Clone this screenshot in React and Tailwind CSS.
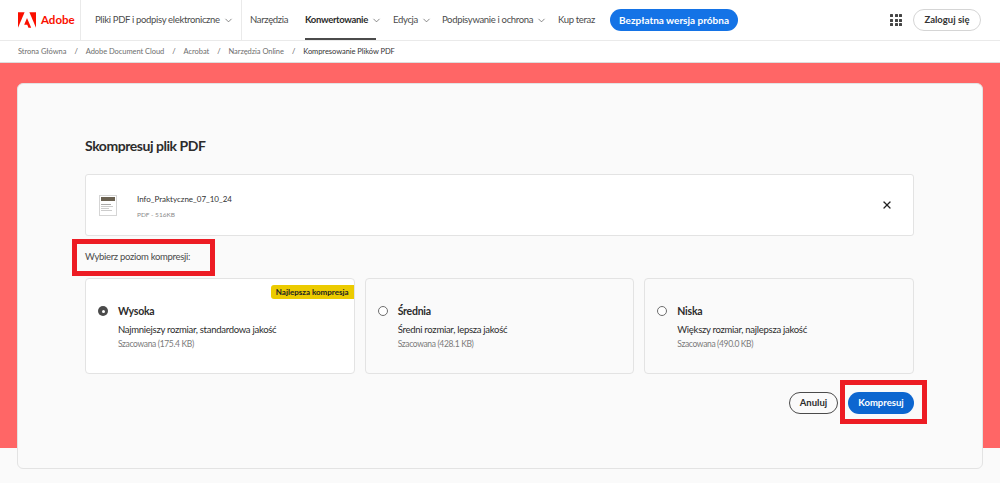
import { ChevronDown, X } from 'lucide-react';

const crumbs = ['Strona Główna', 'Adobe Document Cloud', 'Acrobat', 'Narzędzia Online'];

const levels = [
  { name: 'Wysoka', desc: 'Najmniejszy rozmiar, standardowa jakość', est: 'Szacowana (175.4 KB)', active: true },
  { name: 'Średnia', desc: 'Średni rozmiar, lepsza jakość', est: 'Szacowana (428.1 KB)' },
  { name: 'Niska', desc: 'Większy rozmiar, najlepsza jakość', est: 'Szacowana (490.0 KB)' },
];

function NavItem({ label, className = '', bold, chevron = true, underline }) {
  return (
    <div className={`relative flex h-full items-center whitespace-nowrap ${className}`}>
      <span className={bold ? 'font-bold text-[#2c2c2c]' : 'text-[#4b4b4b]'}>{label}</span>
      {chevron && <ChevronDown className="ml-[3px] h-[11px] w-[11px] text-[#555]" strokeWidth={1.5} />}
      {underline && <span className="absolute bottom-0 left-0 h-[2px] w-[71px] bg-[#4b4b4b]" />}
    </div>
  );
}

function AdobeLogo() {
  return (
    <svg viewBox="0 0 30 26" className="h-[16px] w-[18px]" fill="#fa0f00">
      <path d="M0 0h11L0 26z" />
      <path d="M30 0H19l11 26z" />
      <path d="M15 9.5L22 26h-4.600l-2-5.200H10.300z" />
    </svg>
  );
}

function Thumb() {
  return (
    <div className="flex h-[21px] w-[18px] flex-col gap-[1px] border border-[#d5d5d5] bg-white p-[1px]">
      <div className="h-[4px] bg-[#6b6252]" />
      <div className="mt-[2px] h-[1px] w-[10px] bg-[#aaa]" />
      <div className="h-[1px] w-[12px] bg-[#ccc]" />
      <div className="h-[1px] w-[8px] bg-[#ccc]" />
      <div className="h-[1px] w-[11px] bg-[#ccc]" />
    </div>
  );
}

function GridIcon() {
  return (
    <div className="grid grid-cols-3 gap-[1.5px]">
      {Array.from({ length: 9 }).map((_, i) => (
        <span key={i} className="h-[3px] w-[3px] rounded-[0.5px] bg-[#444]" />
      ))}
    </div>
  );
}

function Level({ level }) {
  return (
    <div className={`relative h-[96px] flex-1 rounded-[4px] border border-[#e3e3e3] pl-[12px] pt-[25px] ${level.active ? 'bg-white' : 'bg-[#fafafa]'}`}>
      {level.active && (
        <span className="absolute right-0 top-[6px] flex h-[14px] w-[83px] items-center justify-center whitespace-nowrap rounded-l-[3px] bg-[#eccb00] text-[8px] font-bold text-[#222]">
          Najlepsza kompresja
        </span>
      )}
      <div className="flex items-center">
        {level.active ? (
          <span className="flex h-[10px] w-[10px] items-center justify-center rounded-full bg-[#4b4b4b]">
            <span className="h-[3px] w-[3px] rounded-full bg-white" />
          </span>
        ) : (
          <span className="h-[10px] w-[10px] rounded-full border-[1.5px] border-[#6e6e6e] bg-white" />
        )}
        <span className="ml-[10px] text-[10.5px] font-bold leading-[14px] tracking-[-0.25px] text-[#2c2c2c]">{level.name}</span>
      </div>
      <p className="ml-[20px] mt-[5px] text-[9.5px] leading-[14px] tracking-[-0.28px] text-[#2c2c2c]">{level.desc}</p>
      <p className="ml-[20px] mt-[1px] text-[8.5px] leading-[12px] tracking-[-0.35px] text-[#7a7a7a]">{level.est}</p>
    </div>
  );
}

export default function App() {
  return (
    <div className="relative h-[483px] w-[1000px] overflow-hidden bg-[#fafafa] font-['Lato',sans-serif]">
      {/* Top nav */}
      <header className="flex h-[41px] items-center border-b border-[#eaeaea] bg-white text-[9.5px] tracking-[-0.33px]">
        <div className="flex h-full w-[81px] items-center gap-[5px] border-r border-[#eaeaea] pl-[18px]">
          <AdobeLogo />
          <span className="text-[11.5px] font-bold tracking-normal text-[#fa0f00]">Adobe</span>
        </div>
        <div className="flex h-full w-[161px] items-center border-r border-[#eaeaea] pl-[14px]">
          <NavItem label="Pliki PDF i podpisy elektroniczne" />
        </div>
        <NavItem label="Narzędzia" chevron={false} className="ml-[8px] w-[55px]" />
        <NavItem label="Konwertowanie" bold underline className="w-[88px]" />
        <NavItem label="Edycja" className="w-[49px]" />
        <NavItem label="Podpisywanie i ochrona" className="w-[116px]" />
        <NavItem label="Kup teraz" chevron={false} className="w-[52px]" />
        <button className="h-[22px] w-[128px] rounded-full bg-[#1473e6] text-[10px] font-bold tracking-normal text-white">
          Bezpłatna wersja próbna
        </button>
        <div className="ml-auto flex items-center">
          <GridIcon />
          <button className="ml-[11px] mr-[19px] h-[22px] w-[68px] rounded-full border border-[#d5d5d5] text-[9.5px] font-bold tracking-normal text-[#333]">
            Zaloguj się
          </button>
        </div>
      </header>

      {/* Breadcrumbs */}
      <nav className="flex h-[21px] items-center bg-white pl-[18px] text-[7.5px] tracking-[-0.05px] text-[#6e6e6e]">
        {crumbs.map((c) => (
          <span key={c} className="flex items-center">
            {c}
            <span className="mx-[8px] text-[#555]">/</span>
          </span>
        ))}
        <span className="text-[#333]">Kompresowanie Plików PDF</span>
      </nav>

      {/* Red band */}
      <main className="h-[386px] border-t border-[#ddd] bg-[#ff6666] px-[17px] pt-[20px]">
        <section className="h-[386px] rounded-[6px] border border-[#e3e3e3] bg-[#fafafa] pl-[67px] pr-[68px] pt-[53px]">
          <h1 className="text-[14px] font-bold leading-[18px] tracking-[-0.45px] text-[#2c2c2c]">Skompresuj plik PDF</h1>

          <div className="mt-[19px] flex h-[62px] items-center rounded-[3px] border border-[#e3e3e3] bg-white pl-[13px] pr-[20px]">
            <Thumb />
            <div className="ml-[20px] pt-[3px]">
              <p className="text-[8px] leading-[12px] text-[#333]">Info_Praktyczne_07_10_24</p>
              <p className="mt-[5px] text-[6.5px] leading-[10px] text-[#8a8a8a]">PDF - 516KB</p>
            </div>
            <X className="ml-auto h-[12px] w-[12px] text-[#222]" strokeWidth={2.5} />
          </div>

          <p className="mt-[14px] text-[9.5px] leading-[14px] tracking-[-0.3px] text-[#4b4b4b]">Wybierz poziom kompresji:</p>

          <div className="mt-[14px] flex gap-[10px]">
            {levels.map((l) => (
              <Level key={l.name} level={l} />
            ))}
          </div>

          <div className="mt-[18px] flex justify-end gap-[10px]">
            <button className="h-[22px] w-[49px] rounded-full border-[1.5px] border-[#4b4b4b] text-[9.5px] font-bold text-[#2c2c2c]">
              Anuluj
            </button>
            <button className="h-[22px] w-[66px] rounded-full bg-[#0d66d0] text-[9.5px] font-bold text-white">
              Kompresuj
            </button>
          </div>
        </section>
      </main>

      {/* Red annotation frames from the screenshot */}
      <div className="absolute left-[72px] top-[239px] h-[37px] w-[143px] border-[5px] border-[#ed1c24]" />
      <div className="absolute left-[840px] top-[380px] h-[44px] w-[87px] border-[5px] border-[#ed1c24]" />
    </div>
  );
}
